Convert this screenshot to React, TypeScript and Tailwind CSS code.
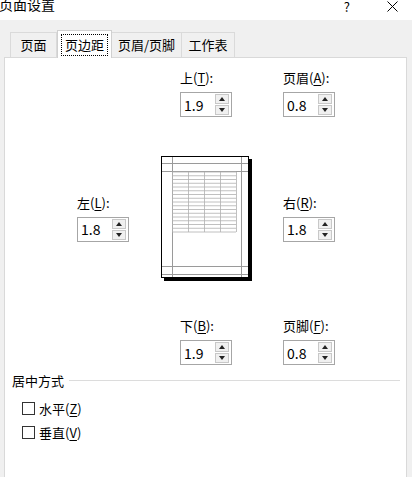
import React from "react";

const Spinner = () => (
  <div className="flex flex-col gap-[1px] mr-[2px]">
    <div className="w-[14px] h-[10px] bg-[#f0f0f0] border border-[#c8c8c8] flex items-center justify-center">
      <svg width="6" height="4" viewBox="0 0 6 4">
        <path d="M0 4 L3 0 L6 4 Z" fill="#222" />
      </svg>
    </div>
    <div className="w-[14px] h-[10px] bg-[#f0f0f0] border border-[#c8c8c8] flex items-center justify-center">
      <svg width="6" height="4" viewBox="0 0 6 4">
        <path d="M0 0 L6 0 L3 4 Z" fill="#222" />
      </svg>
    </div>
  </div>
);

interface FieldProps {
  label: string;
  hotkey: string;
  value: string;
}

const Field: React.FC<FieldProps> = ({ label, hotkey, value }) => (
  <div className="flex flex-col w-[52px] shrink-0">
    <div className="h-[16px] leading-[16px] text-[13px] whitespace-nowrap mb-[6px]">
      {label}(<span className="underline underline-offset-2">{hotkey}</span>):
    </div>
    <div className="h-[25px] border border-[#a6a6a6] bg-white flex items-center justify-between pl-[3px]">
      <span className="text-[14px] leading-none">{value}</span>
      <Spinner />
    </div>
  </div>
);

const PagePreview = () => {
  const rows = Array.from({ length: 17 }, (_, i) => 17 + i * 3.75);
  const cols = [12, 28, 44, 60, 76];
  return (
    <svg width="92" height="126" viewBox="0 0 92 126" className="shrink-0">
      <rect x="1.5" y="1.5" width="87" height="121" fill="#fff" stroke="#000" />
      <rect x="89" y="4" width="3" height="122" fill="#000" />
      <rect x="4" y="123" width="88" height="3" fill="#000" />
      {/* margin guides */}
      <line x1="12.5" y1="2" x2="12.5" y2="122" stroke="#9a9a9a" />
      <line x1="81.5" y1="2" x2="81.5" y2="122" stroke="#9a9a9a" />
      <line x1="2" y1="8.5" x2="88" y2="8.5" stroke="#9a9a9a" />
      <line x1="2" y1="16.5" x2="88" y2="16.5" stroke="#9a9a9a" />
      <line x1="2" y1="111.5" x2="88" y2="111.5" stroke="#9a9a9a" />
      <line x1="2" y1="119.5" x2="88" y2="119.5" stroke="#9a9a9a" />
      {/* sheet grid */}
      {rows.map((y) => (
        <line key={y} x1="12" y1={y} x2="76" y2={y} stroke="#b0b0b0" strokeWidth="0.8" />
      ))}
      {cols.map((x) => (
        <line key={x} x1={x + 0.5} y1="17" x2={x + 0.5} y2="77" stroke="#b0b0b0" strokeWidth="0.8" />
      ))}
    </svg>
  );
};

const Check: React.FC<{ text: string; hotkey: string }> = ({ text, hotkey }) => (
  <div className="flex items-center h-[13px]">
    <div className="w-[13px] h-[13px] border border-[#333] bg-white" />
    <span className="ml-[4px] text-[13px] leading-none">
      {text}(<span className="underline underline-offset-2">{hotkey}</span>)
    </span>
  </div>
);

export default function App() {
  return (
    <div className="w-[412px] h-[477px] overflow-hidden bg-[#f0f0f0] text-black font-['Noto_Sans_CJK_SC',sans-serif]">
      {/* title bar */}
      <div className="h-[20px] bg-white flex items-start relative">
        <span className="text-[14px] leading-[14px] -mt-[3px] -ml-[1px]">页面设置</span>
        <span className="ml-auto text-[13px] leading-[14px]">?</span>
        <svg width="11" height="11" viewBox="0 0 11 11" className="ml-[37px] mr-[14px] mt-[1px]">
          <path d="M0.5 0.5 L10.5 10.5 M10.5 0.5 L0.5 10.5" stroke="#000" strokeWidth="1" />
        </svg>
      </div>

      {/* tabs */}
      <div className="h-[37px] flex items-end pl-[10px] text-[13px]">
        <div className="w-[47px] h-[25px] border border-b-0 border-[#dadada] flex items-center justify-center">页面</div>
        <div className="w-[55px] h-[28px] -mb-px bg-white border border-b-0 border-[#d0d0d0] relative z-10 flex items-center justify-center">
          <span className="border border-dotted border-[#000] px-[3px] leading-[20px]">页边距</span>
        </div>
        <div className="w-[70px] h-[25px] border border-l-0 border-b-0 border-[#dadada] flex items-center justify-center">页眉/页脚</div>
        <div className="w-[53px] h-[25px] border border-l-0 border-b-0 border-[#dadada] flex items-center justify-center">工作表</div>
      </div>

      {/* panel */}
      <div className="ml-[4px] w-[403px] h-[430px] bg-white border border-[#d9d9d9] pt-[12px]">
        <div className="flex pl-[175px] gap-[51px]">
          <Field label="上" hotkey="T" value="1.9" />
          <Field label="页眉" hotkey="A" value="0.8" />
        </div>

        <div className="flex items-center pl-[72px] mt-[38px]">
          <Field label="左" hotkey="L" value="1.8" />
          <div className="ml-[31px]">
            <PagePreview />
          </div>
          <div className="ml-[31px]">
            <Field label="右" hotkey="R" value="1.8" />
          </div>
        </div>

        <div className="flex pl-[175px] gap-[51px] mt-[37px]">
          <Field label="下" hotkey="B" value="1.9" />
          <Field label="页脚" hotkey="F" value="0.8" />
        </div>

        <div className="flex items-center mt-[7px] pl-[7px] pr-[6px] h-[16px]">
          <span className="text-[13px] leading-none">居中方式</span>
          <div className="flex-1 ml-[5px] border-t border-[#dcdcdc]" />
        </div>

        <div className="flex flex-col gap-[11px] pl-[17px] mt-[14px]">
          <Check text="水平" hotkey="Z" />
          <Check text="垂直" hotkey="V" />
        </div>
      </div>
    </div>
  );
}
